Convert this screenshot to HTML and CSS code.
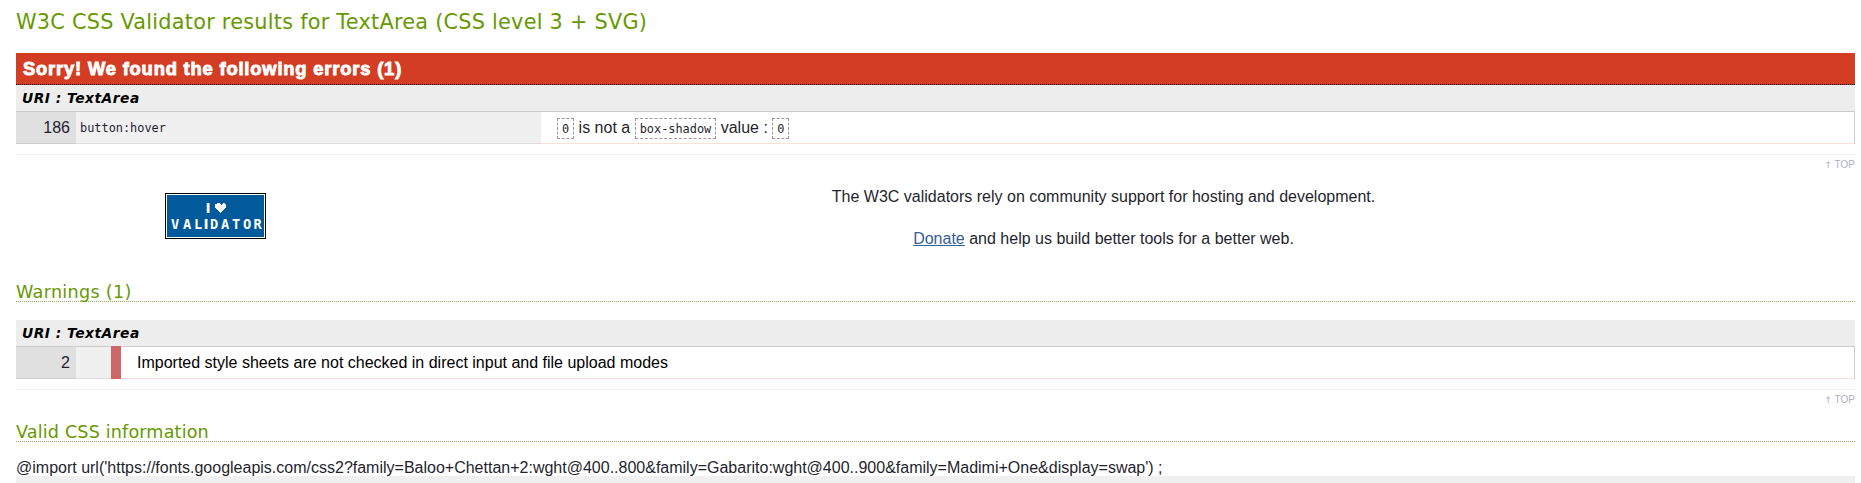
FILE: index.html
```html
<!DOCTYPE html>
<html lang="en">
<head>
<meta charset="utf-8">
<title>W3C CSS Validator results for TextArea</title>
<link rel="stylesheet" href="styles.css">
</head>
<body>
<main class="results">
  <h2 class="title">W3C CSS Validator results for TextArea (CSS level 3 + SVG)</h2>
  <h3 class="invalid">Sorry! We found the following errors (1)</h3>
  <section class="section">
    <h4 class="uri">URI : TextArea</h4>
    <div class="row">
      <span class="line">186</span>
      <span class="context">button:hover</span>
      <p class="message"><code>0</code> is not a <code>box-shadow</code> value : <code>0</code></p>
    </div>
  </section>
  <p class="top"><a><span class="arrow">↑</span> TOP</a></p>
  <section class="support">
    <div class="badge">
      <svg width="101" height="46" viewBox="0 0 101 46">
        <rect width="101" height="46" fill="#000"/>
        <rect x="1" y="1" width="99" height="44" fill="#fff"/>
        <rect x="2" y="2" width="97" height="42" fill="#005a9c"/>
        <text class="badge-text sans" x="43" y="20">I</text>
        <path shape-rendering="crispEdges" fill="#fff" d="M52 10h3v1h1v1h1v-1h1v-1h2v1h1v4h-1v1h-1v1h-1v1h-1v1h-1v1h-1v-1h-1v-1h-1v-1h-1v-1h-1v-1h-1v-4h1z"/>
        <text class="badge-text" x="10 22 33 41 49 60 71 82 92.5" y="36">VAL<tspan class="sans">I</tspan>DATOR</text>
      </svg>
    </div>
    <div class="pitch">
      <p>The W3C validators rely on community support for hosting and development.</p>
      <p><a class="donate" href="#">Donate</a> and help us build better tools for a better web.</p>
    </div>
  </section>
  <h3 class="heading">Warnings (1)</h3>
  <section class="section warnings">
    <h4 class="uri">URI : TextArea</h4>
    <div class="row">
      <span class="line">2</span>
      <span class="context short"></span>
      <span class="level"></span>
      <p class="message">Imported style sheets are not checked in direct input and file upload modes</p>
    </div>
  </section>
  <p class="top"><a><span class="arrow">↑</span> TOP</a></p>
  <h3 class="heading second">Valid CSS information</h3>
  <p class="import">@import url('https://fonts.googleapis.com/css2?family=Baloo+Chettan+2:wght@400..800&amp;family=Gabarito:wght@400..900&amp;family=Madimi+One&amp;display=swap') ;</p>
  <div class="rule"></div>
</main>
</body>
</html>
```
FILE: styles.css
```css
* { box-sizing: border-box; }
html, body { margin: 0; height: 483px; overflow: hidden; }
body { background: #fff; color: #1f1f2e; font: 16px/20px "Liberation Sans", Arial, sans-serif; }
h2, h3, h4, p { margin: 0; font-weight: normal; }
.results { display: flex; flex-direction: column; height: 483px; padding: 0 6px 0 16px; }
.results > * { flex: none; }
.title { height: 53px; padding-top: 9px; color: #690; font: 20.8px/26px "DejaVu Sans", Verdana, sans-serif; letter-spacing: .25px; }
.invalid { height: 32px; padding-left: 7px; background: #d23d24; border-bottom: 1px dotted #000; color: #fff; font: 900 18.4px/32px "Liberation Sans", Arial, sans-serif; letter-spacing: .8px; -webkit-text-stroke: .9px #fff; }
.uri { height: 26px; padding-left: 6px; background: #ededed; color: #000; font: italic bold 13.8px/27px "DejaVu Sans", Verdana, sans-serif; letter-spacing: .5px; }
.row { display: flex; height: 33px; border-top: 1px solid #ccc; border-right: 1px solid #ccc; line-height: 31px; }
.line { width: 60px; padding-right: 6px; background: #e0e0e0; border-bottom: 1px solid #ccc; text-align: right; }
.context { width: 465px; padding-left: 4px; background: #f0f0f0; border-bottom: 1px solid #ddd; font: 11.9px/32px "DejaVu Sans Mono", monospace; }
.short { width: 35px; }
.level { width: 10px; margin-top: -1px; background: #cd6666; }
.message { flex: 1; padding-left: 16px; border-bottom: 1px solid #fdd; }
.warnings .message { color: #000; }
code { display: inline-block; height: 21px; padding: 0 4px; border: 1px dashed #999; font: 11.9px/20px "DejaVu Sans Mono", monospace; }
.top { height: 37px; margin-top: 10px; padding-top: 1px; border-top: 1px solid #eef; color: #aeaec6; font-size: 10px; line-height: 17px; text-align: right; }
.arrow { font-family: "DejaVu Sans", sans-serif; font-size: 9px; }
.support { display: flex; height: 93px; }
.badge { flex: none; width: 400px; padding: 2px 0 0 149px; }
.badge svg { display: block; }
.badge-text { fill: #fff; font: bold 13.7px "DejaVu Sans Mono", monospace; text-anchor: middle; }
.sans { font-family: "DejaVu Sans", sans-serif; }
.pitch { flex: none; display: flex; flex-direction: column; gap: 22px; width: 1375px; margin-top: -4px; text-align: center; line-height: 20px; }
.donate { color: #365d95; text-decoration: underline; }
.heading { height: 18px; border-bottom: 1px dotted #9a6; color: #690; font: 17.6px/16px "DejaVu Sans", Verdana, sans-serif; letter-spacing: .3px; }
.second { letter-spacing: .15px; }
.warnings { margin-top: 18px; }
.warnings + .top { height: 35px; }
.import { margin-top: 16px; height: 18px; }
.rule { height: 7px; background: #f0f0f0; }
```
